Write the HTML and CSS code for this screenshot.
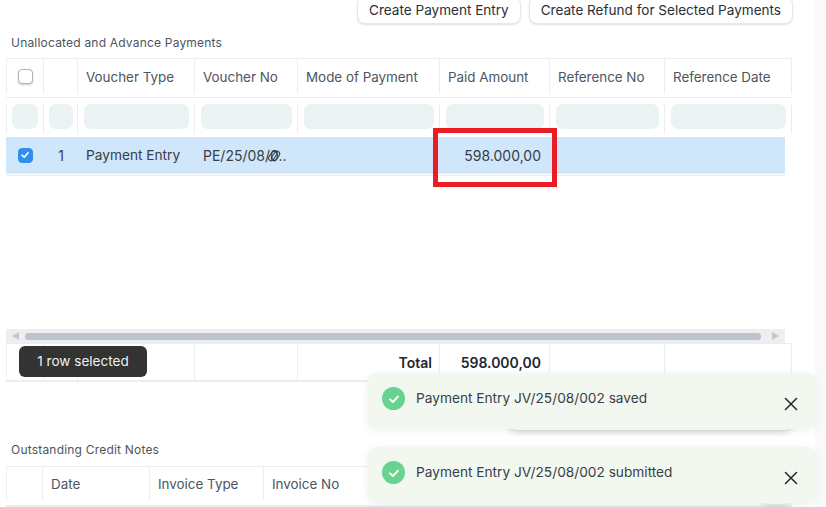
FILE: index.html
```html
<!DOCTYPE html>
<html lang="en">
<head>
    <meta charset="UTF-8">
    <title>Payment Reconciliation</title>
    <link rel="stylesheet" href="styles.css">
</head>
<body>
    <div class="page">
        <main class="content">
            <div class="actions">
                <button class="btn">Create Payment Entry</button>
                <button class="btn">Create Refund for Selected Payments</button>
            </div>

            <div class="section-label first">Unallocated and Advance Payments</div>
            <div class="datatable payments">
                <div class="row head">
                    <div class="cell"><span class="check"></span></div>
                    <div class="cell"></div>
                    <div class="cell">Voucher Type</div>
                    <div class="cell">Voucher No</div>
                    <div class="cell">Mode of Payment</div>
                    <div class="cell">Paid Amount</div>
                    <div class="cell">Reference No</div>
                    <div class="cell">Reference Date</div>
                </div>
                <div class="row filters">
                    <div class="cell"><span class="filter"></span></div>
                    <div class="cell"><span class="filter"></span></div>
                    <div class="cell"><span class="filter"></span></div>
                    <div class="cell"><span class="filter"></span></div>
                    <div class="cell"><span class="filter"></span></div>
                    <div class="cell"><span class="filter"></span></div>
                    <div class="cell"><span class="filter"></span></div>
                    <div class="cell"><span class="filter"></span></div>
                </div>
                <div class="row selected">
                    <div class="cell">
                        <span class="check on">
                            <svg width="10" height="10" viewBox="0 0 10 10"><path d="M2 5.2 4.2 7.2 8 2.9" fill="none" stroke="#fff" stroke-width="1.6" stroke-linecap="round" stroke-linejoin="round"/></svg>
                        </span>
                    </div>
                    <div class="cell num">1</div>
                    <div class="cell type">Payment Entry</div>
                    <div class="cell voucher">PE/25/08/0..
                        <svg class="link-cursor" width="16" height="16" viewBox="0 0 16 16">
                            <g fill="none" stroke="#3a4048" stroke-width="1">
                                <rect x="1.4" y="5.4" width="10.4" height="5.2" rx="2.6" transform="rotate(-55 6.6 8)"/>
                                <rect x="4.4" y="5.4" width="10.4" height="5.2" rx="2.6" transform="rotate(-55 9.6 8)"/>
                            </g>
                        </svg>
                    </div>
                    <div class="cell"></div>
                    <div class="cell right figure">598.000,00</div>
                    <div class="cell"></div>
                    <div class="cell"></div>
                </div>
                <div class="table-body"></div>
                <div class="scrollbar">
                    <span class="arrow left"></span>
                    <span class="thumb"></span>
                    <span class="arrow right-arrow"></span>
                </div>
                <div class="row total">
                    <div class="cell"></div>
                    <div class="cell"></div>
                    <div class="cell"></div>
                    <div class="cell"></div>
                    <div class="cell right strong">Total</div>
                    <div class="cell right strong figure">598.000,00</div>
                    <div class="cell"></div>
                    <div class="cell"></div>
                </div>
                <div class="selected-pill">1 row selected</div>
                <div class="highlight"></div>
            </div>

            <div class="section-label second">Outstanding Credit Notes</div>
            <div class="datatable notes">
                <div class="row head">
                    <div class="cell"></div>
                    <div class="cell">Date</div>
                    <div class="cell">Invoice Type</div>
                    <div class="cell">Invoice No</div>
                    <div class="cell"></div>
                    <div class="cell"></div>
                    <div class="cell"></div>
                </div>
                <div class="row stub">
                    <div class="cell"></div>
                    <div class="cell"></div>
                    <div class="cell"></div>
                    <div class="cell"></div>
                    <div class="cell"></div>
                    <div class="cell"></div>
                    <div class="cell"></div>
                </div>
            </div>
        </main>
        <aside class="side-strip"></aside>
    </div>

    <div class="toast-shadow"></div>
    <div class="toast-shadow lower"></div>
    <div class="toasts">
        <div class="toast">
            <span class="toast-icon">
                <svg width="14" height="14" viewBox="0 0 14 14"><path d="M3 7.4 5.9 10 11 4.6" fill="none" stroke="#fff" stroke-width="1.9" stroke-linecap="round" stroke-linejoin="round"/></svg>
            </span>
            <span class="toast-text">Payment Entry JV/25/08/002 saved</span>
            <svg class="toast-close" width="14" height="14" viewBox="0 0 14 14"><path d="M1.5 1.5 12.5 12.5M12.5 1.5 1.5 12.5" stroke="#1f272e" stroke-width="1.5" stroke-linecap="round"/></svg>
        </div>
        <div class="toast">
            <span class="toast-icon">
                <svg width="14" height="14" viewBox="0 0 14 14"><path d="M3 7.4 5.9 10 11 4.6" fill="none" stroke="#fff" stroke-width="1.9" stroke-linecap="round" stroke-linejoin="round"/></svg>
            </span>
            <span class="toast-text">Payment Entry JV/25/08/002 submitted</span>
            <svg class="toast-close" width="14" height="14" viewBox="0 0 14 14"><path d="M1.5 1.5 12.5 12.5M12.5 1.5 1.5 12.5" stroke="#1f272e" stroke-width="1.5" stroke-linecap="round"/></svg>
        </div>
    </div>
</body>
</html>
```

FILE: styles.css
```css
* {
    box-sizing: border-box;
}

html, body {
    margin: 0;
    height: 507px;
    overflow: hidden;
}

body {
    position: relative;
    background: #fff;
    font-family: "Inter", "Liberation Sans", sans-serif;
    font-size: 13.4px;
    color: #383f47;
}

.page {
    display: flex;
    height: 507px;
}

.content {
    width: 815px;
    padding-left: 6px;
    flex: none;
}

.side-strip {
    flex: 1;
    background: #f8f9f9;
}

/* top buttons */
.actions {
    display: flex;
    justify-content: flex-end;
    gap: 8px;
    width: 787px;
    height: 24px;
}

.btn {
    height: 28px;
    margin-top: -4px;
    padding: 0 11px;
    background: #fff;
    border: 1px solid #e6e8ea;
    border-radius: 8px;
    box-shadow: 0 1px 2px rgba(0, 0, 0, 0.12);
    font-family: inherit;
    font-size: 13.55px;
    color: #2a3038;
}

.section-label {
    padding-left: 5px;
    font-size: 12px;
    line-height: 16px;
    letter-spacing: 0.2px;
    color: #4c5560;
}

.section-label.first {
    margin-top: 11px;
    margin-bottom: 7px;
}

.section-label.second {
    margin-top: 60px;
    margin-bottom: 8px;
}

/* tables */
.datatable {
    position: relative;
    width: 786px;
}

.row {
    display: grid;
    border-top: 1px solid #ebedef;
    height: 39px;
}

.payments .row {
    grid-template-columns: 38px 34px 117px 103px 142px 110px 115px 127px;
}

.notes .row {
    grid-template-columns: 37px 107px 114px 158px 136px 136px 98px;
}

.cell {
    display: flex;
    align-items: center;
    min-width: 0;
    padding: 0 8px;
    border-right: 1px solid #ebedef;
    white-space: nowrap;
}

.cell:first-child {
    border-left: 1px solid #ebedef;
}

.row.head {
    height: 39px;
    padding-bottom: 3px;
    color: #4c5560;
}

.notes .row.head {
    padding-bottom: 5px;
}

.row.head .cell:first-child {
    justify-content: center;
}

.row.filters {
    height: 37px;
    padding-top: 6px;
    padding-bottom: 0;
}

.row.filters .cell {
    align-items: flex-start;
    padding: 0 5px 0 6px;
}

.row.filters .cell:first-child {
    padding: 0 5px;
}

.row.filters .cell:nth-child(2) {
    padding: 0 4px 0 5px;
}

.filter {
    display: block;
    width: 100%;
    height: 25px;
    background: #ebf2f3;
    border-radius: 7px;
}

.row.selected {
    width: 779px;
    height: 37px;
    margin-top: 3px;
    background: #d0e6fb;
    border-top: 0;
    border-bottom: 1px solid #ebedef;
    box-shadow: 0 1px 0 #fff, 0 2px 0 #e8eaec;
    color: #383f47;
    overflow: hidden;
}

.row.selected .cell {
    border: 0;
}

.row.selected .cell:first-child {
    justify-content: center;
}

.row.selected .num {
    justify-content: center;
    font-size: 14px;
}

.cell.type {
    font-size: 13.7px;
}

.cell.voucher {
    position: relative;
    overflow: hidden;
    font-size: 14px;
}

.link-cursor {
    position: absolute;
    left: 71px;
    top: 11px;
}

.cell.right {
    justify-content: flex-end;
}

.cell.figure {
    padding-right: 9px;
    font-size: 14px;
}

.cell.strong {
    padding-right: 7px;
    font-size: 14px;
    font-weight: 600;
    color: #1f272e;
}

.cell.strong.figure {
    padding-right: 8px;
}

.check {
    display: flex;
    align-items: center;
    justify-content: center;
    width: 15px;
    height: 15px;
    background: #fff;
    border: 1px solid #aeb4ba;
    border-radius: 4px;
    box-shadow: 0 1px 2px rgba(0, 0, 0, 0.2);
}

.check.on {
    background: #2f8fef;
    border-color: #2f8fef;
    box-shadow: none;
}

.table-body {
    height: 155px;
}

.scrollbar {
    display: flex;
    align-items: center;
    width: 779px;
    height: 14px;
    padding: 0 6px;
    gap: 6px;
    background: #eceef0;
}

.thumb {
    flex: 1;
    height: 7px;
    background: #bfc3cb;
    border-radius: 4px;
}

.arrow {
    width: 0;
    height: 0;
    border-top: 4px solid transparent;
    border-bottom: 4px solid transparent;
}

.arrow.left {
    border-right: 7px solid #c4c8ce;
}

.arrow.right-arrow {
    margin-left: 5px;
    border-left: 7px solid #c4c8ce;
}

.row.total {
    height: 39px;
    border-top: 1px solid #ebedef;
    border-bottom: 2px solid #ebedef;
}

.row.stub {
    height: 4px;
    border-top: 2px solid #ebedef;
}

.selected-pill {
    position: absolute;
    left: 13px;
    top: 288px;
    width: 128px;
    height: 31px;
    background: #333;
    border-radius: 6px;
    font-size: 13.55px;
    line-height: 31px;
    text-align: center;
    color: #f0f0f0;
}

.highlight {
    position: absolute;
    left: 427px;
    top: 70px;
    width: 124px;
    height: 59px;
    border: 5px solid #ec1c24;
}

/* toasts */
.toasts {
    position: absolute;
    left: 367px;
    top: 373px;
    display: flex;
    flex-direction: column;
    gap: 18px;
    width: 450px;
}

.toast {
    position: relative;
    display: flex;
    align-items: flex-start;
    gap: 11px;
    height: 56px;
    padding: 14px 15px;
    background: #f2f8ef;
    border-radius: 10px;
    box-shadow: 0 2px 8px rgba(0, 0, 0, 0.06);
    font-size: 13.7px;
    line-height: 22px;
    color: #383f47;
}

.toast-icon {
    display: flex;
    align-items: center;
    justify-content: center;
    width: 23px;
    height: 23px;
    background: #68d391;
    border-radius: 50%;
}

.toast-close {
    position: absolute;
    right: 19px;
    top: 24px;
}

.toast-shadow {
    position: absolute;
    left: 509px;
    top: 400px;
    width: 283px;
    height: 30px;
    border-radius: 8px;
    box-shadow: 0 2px 6px rgba(0, 0, 0, 0.18);
}

.toast-shadow.lower {
    left: 760px;
    top: 450px;
    width: 32px;
    height: 54px;
    box-shadow: 0 2px 6px rgba(0, 0, 0, 0.12);
}
```
